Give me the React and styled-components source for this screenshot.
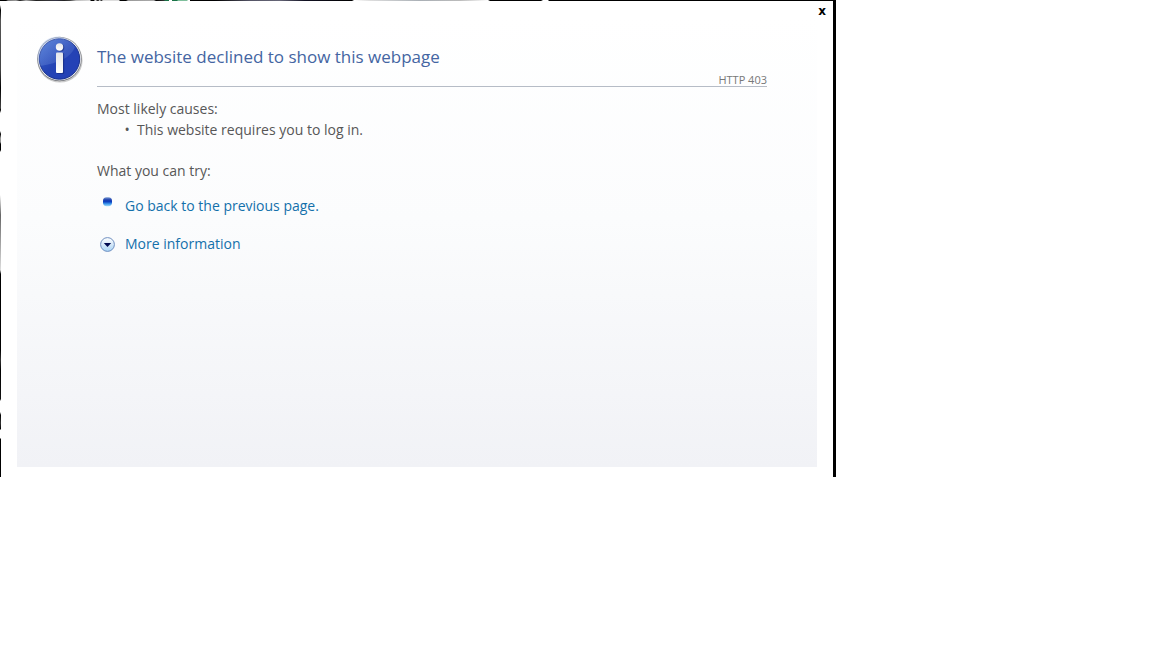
import React, { useState } from "react";
import styled, { createGlobalStyle } from "styled-components";

const GlobalStyle = createGlobalStyle`
  body {
    margin: 0;
    background-color: white;
    color: #575757;
    font-family: "Segoe UI", "Open Sans", "Noto Sans", sans-serif;
    font-size: 14px;
    line-height: 21px;
  }
`;

const topEdge = `linear-gradient(
  to right,
  #000 6px, #777 8px, #999 16px, #222 20px, #aaa 26px, #222 36px, #333 46px,
  #334 56px, #222 64px, #444 70px, #bbb 76px, #ddd 90px, #000 91px, #000 94px,
  #fff 95px, #000 98px, #fff 100px, #000 101px, #ddd 103px, #ddd 119px,
  #000 120px, #000 126px, #999 128px, #aaa 154px, #000 156px, #333 164px,
  #1a7348 165px, #1a7348 169px, #fff 169px, #fff 172px, #1a7348 172px,
  #1a7348 177px, #7fbf9c 178px, #7fbf9c 187px, #fff 188px, #fff 190px,
  #000 190px, #000 215px, #556 250px, #667 280px, #112 305px, #000 352px,
  #fff 354px, #ddd 370px, #aab0b6 420px, #bbb 460px, #fff 488px, #000 490px,
  #000 541px, #fff 543px, #fff 548px, #000 549px
)`;

const leftEdge = `linear-gradient(
  to bottom,
  #fff 5px, #000 10px, #555 20px, #444 70px, #000 88px, #444 108px, #000 110px,
  #fff 113px, #fff 131px, #000 134px, #999 138px, #999 142px, #000 144px,
  #000 150px, #fff 152px, #fff 195px, #666 215px, #ddd 270px, #000 274px,
  #000 350px, #333 360px, #000 370px, #111 399px, #fff 401px, #fff 412px,
  #000 415px, #333 423px, #000 429px, #fff 430px, #fff 438px, #000 439px
)`;

const Dialog = styled.section`
  box-sizing: border-box;
  max-width: 836px;
  padding: 1px 0 10px 1px;
  border-right: 3px solid black;
  background: ${topEdge} top / 100% 1px no-repeat,
    ${leftEdge} left / 1px 100% no-repeat, white;
`;

const TitleBar = styled.div`
  display: flex;
  justify-content: flex-end;
  height: 16px;
  padding-right: 4px;
`;

const CloseBtn = styled.button`
  width: 14px;
  padding: 0;
  border: none;
  background: none;
  color: black;
  font-family: "DejaVu Sans", sans-serif;
  font-size: 12px;
  font-weight: bold;
  line-height: 20px;
  cursor: pointer;
`;

const Panel = styled.main`
  display: flex;
  gap: 12px;
  box-sizing: border-box;
  min-height: 450px;
  margin: 0 16px;
  padding: 18px 50px 20px 20px;
  background: linear-gradient(#ffffff, #fbfcfd 45%, #f1f2f6);
`;

const InfoSvg = styled.svg`
  flex: none;
  width: 48px;
  height: 48px;
`;

const Content = styled.div`
  flex: 1;
  min-width: 0;
`;

const TitleRow = styled.header`
  display: flex;
  justify-content: space-between;
  height: 51px;
  border-bottom: 1px solid #b6bcc6;
`;

const Title = styled.h1`
  margin: 0;
  padding-top: 8px;
  color: #4465a2;
  font-size: 17px;
  font-weight: normal;
  line-height: 28px;
`;

const ErrorCode = styled.span`
  align-self: flex-end;
  color: #787878;
  font-size: 11px;
  line-height: 13px;
`;

const Subtitle = styled.h2`
  margin: 0;
  font-size: 14px;
  font-weight: normal;
`;

const Causes = styled.section`
  padding: 11px 0 20px;
`;

const CauseList = styled.ul`
  margin: 0;
  padding-left: 40px;
  list-style-type: "•  ";
`;

const TaskList = styled.ul`
  display: grid;
  gap: 17px;
  margin: 14px 0 0;
  padding: 0;
  list-style: none;
`;

const Task = styled.li`
  display: grid;
  grid-template-columns: 20px 1fr;
  column-gap: 8px;
`;

const TaskIcon = styled.svg`
  justify-self: center;
  align-self: ${({ $top }) => ($top ? "start" : "center")};
  width: 16px;
  height: 16px;
`;

const TaskLink = styled.a`
  justify-self: start;
  color: #1370ab;
  text-decoration: none;
  &:hover {
    text-decoration: underline;
  }
`;

const MoreBtn = styled.button`
  justify-self: start;
  padding: 0;
  border: none;
  background: none;
  color: #1370ab;
  font: inherit;
  cursor: pointer;
`;

const Details = styled.p`
  grid-column: 2;
  margin: 8px 0 0;
`;

function InfoIcon() {
  return (
    <InfoSvg viewBox="0 0 48 48" aria-hidden="true">
      <defs>
        <linearGradient id="infoRim" x1="0" y1="0" x2="0" y2="1">
          <stop offset="0" stopColor="#a2a4a8" />
          <stop offset="1" stopColor="#6d6f76" />
        </linearGradient>
        <linearGradient id="infoFace" x1="0" y1="0" x2="1" y2="1">
          <stop offset="0" stopColor="#3d6bd0" />
          <stop offset="0.5" stopColor="#2443b4" />
          <stop offset="1" stopColor="#2440b8" />
        </linearGradient>
        <linearGradient id="infoShine" x1="0" y1="0" x2="1" y2="1">
          <stop offset="0" stopColor="#9bb8ee" stopOpacity="0.4" />
          <stop offset="1" stopColor="#7898e0" stopOpacity="0.15" />
        </linearGradient>
        <linearGradient id="infoMark" x1="0" y1="0" x2="0" y2="1">
          <stop offset="0" stopColor="#e4e6ea" />
          <stop offset="1" stopColor="#ffffff" />
        </linearGradient>
      </defs>
      <ellipse cx="23" cy="25.6" rx="22.6" ry="22" fill="#000" opacity="0.2" />
      <circle cx="22.5" cy="24" r="22.3" fill="url(#infoRim)" />
      <circle cx="22.5" cy="24" r="21.5" fill="#e8eaf0" />
      <circle cx="22.5" cy="24" r="20.2" fill="url(#infoFace)" stroke="#1b3390" />
      <path d="M3 31A19.6 19.6 0 0 1 38 12Q32 27 3 31Z" fill="url(#infoShine)" />
      <g fill="#142878" opacity="0.6">
        <circle cx="23.4" cy="12.6" r="3.9" />
        <rect x="19.8" y="18" width="7.4" height="21" rx="1" />
      </g>
      <circle cx="22.5" cy="12" r="3.7" fill="url(#infoMark)" />
      <rect x="19" y="17.4" width="7" height="20.6" rx="1" fill="url(#infoMark)" />
    </InfoSvg>
  );
}

function BulletIcon() {
  return (
    <TaskIcon $top viewBox="0 0 16 16" aria-hidden="true">
      <defs>
        <linearGradient id="bullet" x1="0" y1="0" x2="0" y2="1">
          <stop offset="0" stopColor="#7f9fd4" />
          <stop offset="0.3" stopColor="#1c3fae" />
          <stop offset="0.5" stopColor="#0c3fc0" />
          <stop offset="0.75" stopColor="#3f9cee" />
          <stop offset="1" stopColor="#a5dcf8" />
        </linearGradient>
      </defs>
      <rect x="4" y="2.2" width="9" height="9" rx="3.6" fill="url(#bullet)" />
    </TaskIcon>
  );
}

function ExpandIcon() {
  return (
    <TaskIcon viewBox="0 0 16 16" aria-hidden="true">
      <defs>
        <linearGradient id="expand" x1="0" y1="0" x2="0" y2="1">
          <stop offset="0" stopColor="#ffffff" />
          <stop offset="0.5" stopColor="#d5e8f8" />
          <stop offset="1" stopColor="#a8d4f6" />
        </linearGradient>
      </defs>
      <circle cx="8.5" cy="8.5" r="6.9" fill="url(#expand)" stroke="#6f8fc0" />
      <path d="M4.8 7H12.2L8.5 11Z" fill="#000a50" />
    </TaskIcon>
  );
}

function App() {
  const [isOpen, setIsOpen] = useState(true);
  const [showMore, setShowMore] = useState(false);

  return (
    <>
      <GlobalStyle />
      {isOpen && (
        <Dialog>
          <TitleBar>
            <CloseBtn onClick={() => setIsOpen(false)}>x</CloseBtn>
          </TitleBar>
          <Panel>
            <InfoIcon />
            <Content>
              <TitleRow>
                <Title>The website declined to show this webpage</Title>
                <ErrorCode>HTTP 403</ErrorCode>
              </TitleRow>
              <Causes>
                <Subtitle>Most likely causes:</Subtitle>
                <CauseList>
                  <li>This website requires you to log in.</li>
                </CauseList>
              </Causes>
              <Subtitle>What you can try:</Subtitle>
              <TaskList>
                <Task>
                  <BulletIcon />
                  <TaskLink href="#back">Go back to the previous page.</TaskLink>
                </Task>
                <Task>
                  <ExpandIcon />
                  <MoreBtn
                    aria-expanded={showMore}
                    onClick={() => setShowMore((prev) => !prev)}
                  >
                    More information
                  </MoreBtn>
                  {showMore && <Details>HTTP 403</Details>}
                </Task>
              </TaskList>
            </Content>
          </Panel>
        </Dialog>
      )}
    </>
  );
}

export default App;
